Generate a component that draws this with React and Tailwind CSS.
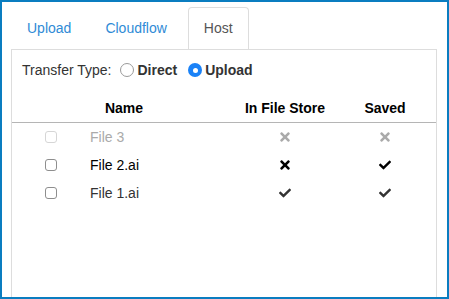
import { FaCheck, FaTimes } from 'react-icons/fa'

const files = [
  { name: 'File 3', disabled: true, store: false, saved: false },
  { name: 'File 2.ai', store: false, saved: true, strong: true },
  { name: 'File 1.ai', store: true, saved: true },
]

function Radio({ checked }) {
  return checked ? (
    <span className="w-[14px] h-[14px] rounded-full bg-[#1a82f7] flex items-center justify-center">
      <span className="w-[5px] h-[5px] rounded-full bg-white" />
    </span>
  ) : (
    <span className="w-[14px] h-[14px] rounded-full border border-[#9a9a9a] bg-white" />
  )
}

function Mark({ ok, color }) {
  return ok ? <FaCheck className={color} size={12} /> : <FaTimes className={color} size={14} />
}

export default function App() {
  return (
    <div
      className="w-[449px] h-[299px] overflow-hidden border-2 border-[#0a7dc0] bg-white text-[14px] text-[#333]"
      style={{ fontFamily: '"Liberation Sans", Arial, sans-serif' }}
    >
      <div className="pl-[9px] pr-[10px] pt-[5px]">
        <div className="flex gap-[4px] pl-px">
          <div className="px-[15px] h-[42px] flex items-center text-[#2f8bd6]">Upload</div>
          <div className="px-[15px] h-[42px] flex items-center text-[#2f8bd6]">Cloudflow</div>
          <div className="ml-[2px] px-[15px] h-[42px] flex items-center text-[#555] bg-white border border-b-0 border-[#ddd] rounded-t-[4px] -mb-px relative">
            Host
          </div>
        </div>
        <div className="border border-[#ddd] h-[260px]">
          <div className="flex items-center px-[10px] pt-[10px] h-[30px]">
            <span>Transfer Type:</span>
            <span className="ml-[9px] flex items-center gap-[3px]">
              <Radio />
              <span className="font-bold">Direct</span>
            </span>
            <span className="ml-[11px] flex items-center gap-[3px]">
              <Radio checked />
              <span className="font-bold">Upload</span>
            </span>
          </div>
          <div className="mt-[15px]">
            <div className="grid grid-cols-[78px_68px_77px_100px_100px] h-[28px] items-center font-bold text-black border-b border-[#b5b5b5]">
              <span />
              <span className="text-center">Name</span>
              <span />
              <span className="text-center">In File Store</span>
              <span className="text-center">Saved</span>
            </div>
            {files.map((f) => {
              const tone = f.disabled ? 'text-[#aaa]' : f.strong ? 'text-black' : 'text-[#333]'
              return (
                <div
                  key={f.name}
                  className="grid grid-cols-[78px_68px_77px_100px_100px] h-[28px] items-center"
                >
                  <span className="flex justify-center">
                    <span
                      className={`w-[12px] h-[12px] rounded-[3px] border bg-white ${
                        f.disabled ? 'border-[#d6d6d6]' : 'border-[#8e8e8e]'
                      }`}
                    />
                  </span>
                  <span className={`whitespace-nowrap ${tone}`}>{f.name}</span>
                  <span />
                  <span className="flex justify-center">
                    <Mark ok={f.store} color={f.store ? 'text-[#333]' : tone} />
                  </span>
                  <span className="flex justify-center">
                    <Mark ok={f.saved} color={tone} />
                  </span>
                </div>
              )
            })}
          </div>
        </div>
      </div>
    </div>
  )
}
